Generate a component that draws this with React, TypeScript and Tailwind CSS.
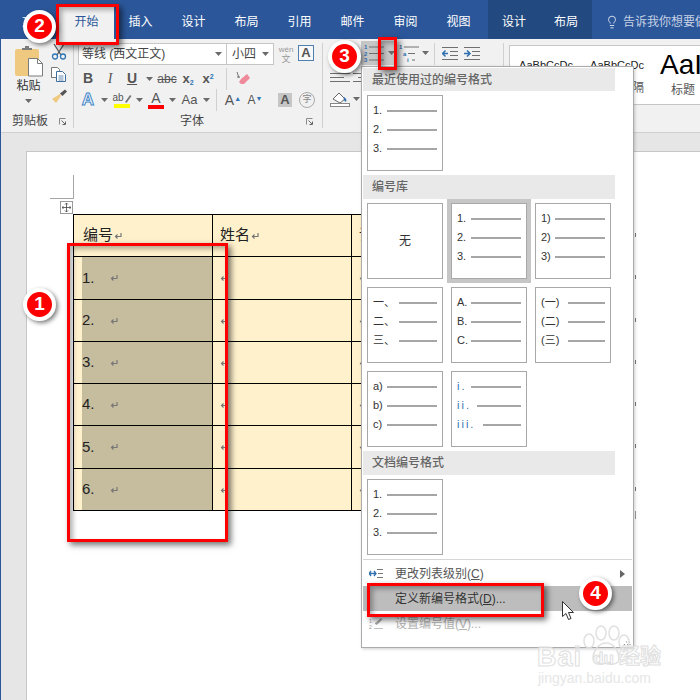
import { Lightbulb } from "lucide-react";
import type { ReactNode } from "react";

const Caret = ({ className = "" }: { className?: string }) => (
  <svg width="7" height="4" viewBox="0 0 7 4" className={className}>
    <path d="M0 0h7L3.5 4z" fill="#6a6a6a" />
  </svg>
);

const Cell = ({ w, children }: { w: string; children: ReactNode }) => (
  <div className={`${w} h-full shrink-0 flex items-center justify-center`}>{children}</div>
);

const Launcher = () => (
  <svg width="7" height="7" viewBox="0 0 7 7">
    <path d="M.5 6.5v-6h6" fill="none" stroke="#8a8a8a" />
    <path d="M2.5 2.5l3.5 3.5M6.5 3.5v3h-3" fill="none" stroke="#666" />
  </svg>
);

const ReturnMark = () => (
  <svg width="8" height="8" viewBox="0 0 8 8" className="shrink-0">
    <path d="M7 1v3.5H1.5M3.5 2.5l-2 2 2 2" fill="none" stroke="#777" strokeWidth="1.2" />
  </svg>
);

const Lines = ({ rows = 3, w = 20, right = false }: { rows?: number; w?: number; right?: boolean }) => (
  <svg width={w} height="13" viewBox={`0 0 ${w} 13`}>
    {Array.from({ length: rows }).map((_, i) => (
      <path
        key={i}
        d={`M${right && i % 2 ? 5 : 0} ${2.5 + i * 4}H${!right && i % 2 ? w - 6 : w}`}
        stroke="#6f6f6f"
      />
    ))}
  </svg>
);

function ClipboardGroup() {
  return (
    <div className="w-[73px] shrink-0 flex flex-col border-r border-[#d0d0d0]">
      <div className="flex pl-[5px]">
        <div className="w-[45px] flex flex-col items-center">
          <svg width="30" height="32" viewBox="0 0 30 32" className="mt-[2px]">
            <rect x="1" y="4" width="24" height="27" rx="2" fill="#f0c981" />
            <path d="M8 5V3h3V1h4v2h3v2z" fill="#7b7b7b" />
            <path d="M14.5 13.5h9l5 5v12.500h-14z" fill="#fff" stroke="#7b7b7b" />
            <path d="M23.500 13.500v5h5" fill="none" stroke="#7b7b7b" />
          </svg>
          <div className="text-[12px] leading-[16px] text-[#333] mt-[1px]">粘贴</div>
          <Caret className="mt-[5px]" />
        </div>
        <div className="flex flex-col gap-[7px]">
          <svg width="16" height="17" viewBox="0 0 16 17">
            <path d="M3 1l7 11M13 1L6 12" stroke="#555" strokeWidth="1.3" />
            <circle cx="4" cy="13.500" r="2.500" fill="none" stroke="#2f75b5" strokeWidth="1.300" />
            <circle cx="12" cy="13.500" r="2.500" fill="none" stroke="#2f75b5" strokeWidth="1.300" />
          </svg>
          <svg width="16" height="15" viewBox="0 0 16 15">
            <path d="M.5.5h6l2 2v8H.5z" fill="#fff" stroke="#777" />
            <path d="M5.500 4.500h6l3 3v7h-9z" fill="#fff" stroke="#3f6f9f" />
            <path d="M7.500 9h5M7.500 11h5M7.500 13h5" stroke="#3f6f9f" strokeWidth=".8" />
          </svg>
          <svg width="16" height="15" viewBox="0 0 16 15">
            <path d="M9 5l-8 5 4 4 5-7z" fill="#f0c981" />
            <path d="M9 4.500l2.500 2.500L16 2.500 14 .5z" fill="#555" />
          </svg>
        </div>
      </div>
      <div className="mt-auto h-[14px] flex items-center">
        <div className="w-[58px] text-center text-[12px] leading-[14px] text-[#444]">剪贴板</div>
        <Launcher />
      </div>
    </div>
  );
}

function FontGroup() {
  return (
    <div className="w-[249px] shrink-0 flex flex-col border-r border-[#d0d0d0] pl-[4px]">
      <div className="flex h-[22px]">
        <div className="w-[149px] h-[22px] bg-white border border-[#c6c6c6] flex items-center justify-between pl-[3px] pr-[4px] text-[12px] text-[#444]">
          <span>等线 (西文正文)</span>
          <Caret />
        </div>
        <div className="w-[47px] h-[22px] bg-white border border-l-0 border-[#c6c6c6] flex items-center justify-between pl-[5px] pr-[4px] text-[12px] text-[#444]">
          <span>小四</span>
          <Caret />
        </div>
        <div className="w-[24px] flex flex-col items-center text-[#999] leading-none pt-[3px]">
          <span className="text-[8px] leading-[8px]">wén</span>
          <span className="text-[9px] leading-[10px]">文</span>
        </div>
        <div className="w-[16px] h-[16px] mt-[2px] border border-[#4f7fae] bg-[#f8f8f8] flex items-center justify-center text-[13px] font-bold text-[#555]">
          A
        </div>
      </div>
      <div className="flex h-[21px] mt-[3px] text-[#555]">
        <Cell w="w-[20px]"><span className="text-[14px] font-bold">B</span></Cell>
        <Cell w="w-[24px]"><span className="text-[14px] italic font-['Liberation_Serif',serif]">I</span></Cell>
        <Cell w="w-[20px]"><span className="text-[14px] font-bold underline">U</span></Cell>
        <Cell w="w-[14px]"><Caret /></Cell>
        <Cell w="w-[22px]"><span className="text-[12px] line-through">abc</span></Cell>
        <Cell w="w-[20px]"><span className="text-[13px] font-bold">x<sub className="text-[7px] text-[#2f75b5]">2</sub></span></Cell>
        <Cell w="w-[20px]"><span className="text-[13px] font-bold">x<sup className="text-[7px] text-[#2f75b5]">2</sup></span></Cell>
        <div className="w-[8px]" />
        <div className="w-px h-[22px] bg-[#d0d0d0]" />
        <Cell w="w-[32px]">
          <svg width="16" height="16" viewBox="0 0 16 16">
            <path d="M6 8l6-5 3 4-6 6H6l-2-2z" fill="#ee8a9a" />
            <path d="M2 1l2 6M2 6h3" stroke="#777" fill="none" />
          </svg>
        </Cell>
      </div>
      <div className="flex h-[22px] text-[#555]">
        <Cell w="w-[20px]">
          <span className="text-[17px] font-bold text-white [-webkit-text-stroke:1px_#3f86c8]">A</span>
        </Cell>
        <Cell w="w-[12px]"><Caret /></Cell>
        <Cell w="w-[24px]">
          <div className="flex flex-col items-center leading-none">
            <div className="flex items-center h-[12px]">
              <span className="text-[10px] leading-[12px]">ab</span>
              <svg width="8" height="10" viewBox="0 0 8 10"><path d="M1 9l5-7 1.500 1-5 7z" fill="#777" /></svg>
            </div>
            <div className="w-[16px] h-[4px] bg-[#ffff00]" />
          </div>
        </Cell>
        <Cell w="w-[11px]"><Caret /></Cell>
        <Cell w="w-[22px]">
          <div className="flex flex-col items-center leading-none">
            <span className="text-[14px] leading-[13px]">A</span>
            <div className="w-[16px] h-[4px] bg-[#ff0000]" />
          </div>
        </Cell>
        <Cell w="w-[10px]"><Caret /></Cell>
        <Cell w="w-[25px]"><span className="text-[13px]">Aa</span></Cell>
        <Cell w="w-[8px]"><Caret /></Cell>
        <div className="w-[6px]" />
        <div className="w-px h-[22px] bg-[#d0d0d0]" />
        <div className="w-[5px]" />
        <Cell w="w-[22px]">
          <span className="text-[14px]">A<sup className="text-[7px] text-[#2f75b5]">▲</sup></span>
        </Cell>
        <Cell w="w-[22px]">
          <span className="text-[12px]">A<sup className="text-[7px] text-[#2f75b5]">▼</sup></span>
        </Cell>
        <div className="w-[8px]" />
        <Cell w="w-[22px]">
          <div className="w-[14px] h-[14px] bg-[#c6c6c6] flex items-center justify-center text-[13px] font-bold">A</div>
        </Cell>
        <Cell w="w-[22px]">
          <div className="w-[16px] h-[16px] rounded-full border border-[#aaa] flex items-center justify-center text-[9px] text-[#888]">字</div>
        </Cell>
      </div>
      <div className="mt-auto h-[14px] flex items-center">
        <div className="w-[228px] text-center text-[12px] leading-[14px] text-[#444]">字体</div>
        <Launcher />
      </div>
    </div>
  );
}

function NumberGlyph({ rows, step = 0 }: { rows: string[]; step?: number }) {
  return (
    <svg width="22" height="20" viewBox="0 0 22 20">
      {rows.map((r, i) => (
        <g key={r}>
          <text x={1 + i * step} y={6 + i * 6.500} fontSize="6" fontWeight="700" fill="#2f6fb0">{r}</text>
          <path d={`M${6 + i * step} ${4 + i * 6.500}H${i && step ? 17 : 21}`} stroke="#6f6f6f" />
        </g>
      ))}
    </svg>
  );
}

function ParagraphGroup() {
  return (
    <div className="w-[181px] shrink-0 flex flex-col border-r border-[#d0d0d0]">
      <div className="flex h-[22px] -mt-[2px]">
        <div className="w-[38px]" />
        <div className="w-[34px] h-[24px] bg-[#c6c6c6] flex items-center pl-[2px] gap-[3px]">
          <NumberGlyph rows={["1", "2", "3"]} />
          <Caret />
        </div>
        <div className="w-[3px]" />
        <div className="w-[34px] flex items-center h-[24px] gap-[2px]">
          <NumberGlyph rows={["1", "a", "i"]} step={4} />
          <Caret />
        </div>
        <div className="w-[2px]" />
        <div className="w-px h-[22px] mt-[2px] bg-[#d0d0d0]" />
        <div className="w-[7px]" />
        <div className="h-[24px] flex items-center gap-[6px]">
          <svg width="16" height="13" viewBox="0 0 16 13">
            <path d="M0 .5h16M8 4.500h8M8 8.500h8M0 12.500h16" stroke="#6f6f6f" />
            <path d="M6 6.500H1M3.500 3.500l-3 3 3 3" stroke="#2f6fb0" strokeWidth="1.500" fill="none" />
          </svg>
          <svg width="16" height="13" viewBox="0 0 16 13">
            <path d="M0 .5h16M8 4.500h8M8 8.500h8M0 12.500h16" stroke="#6f6f6f" />
            <path d="M0 6.500h5M3 3.500l3 3-3 3" stroke="#2f6fb0" strokeWidth="1.500" fill="none" />
          </svg>
        </div>
      </div>
      <div className="flex items-center h-[18px] mt-[5px] pl-[7px] gap-[3px]">
        <Lines />
        <Lines right />
      </div>
      <div className="flex items-center h-[18px] mt-[4px] pl-[7px] gap-[3px]">
        <svg width="20" height="16" viewBox="0 0 20 16">
          <path d="M3 8l6-6 6 6-5 4z" fill="#fff" stroke="#666" />
          <path d="M14 6c2 1 3 3 2 5-2-1-3-3-2-5z" fill="#2f6fb0" />
          <rect x=".5" y="12.500" width="19" height="3" fill="#fff" stroke="#888" />
        </svg>
        <Caret />
      </div>
    </div>
  );
}

function StylesGroup() {
  return (
    <div className="flex-1 pl-[5px] pt-[2px] min-w-0 overflow-hidden">
      <div className="h-[60px] bg-white border border-r-0 border-[#c6c6c6] flex overflow-hidden">
        <div className="w-[72px] shrink-0 flex flex-col items-center pt-[12px]">
          <span className="text-[11px] leading-[14px] text-[#222]">AaBbCcDc</span>
        </div>
        <div className="w-[70px] shrink-0 flex flex-col items-center pt-[12px]">
          <span className="text-[11px] leading-[14px] text-[#222]">AaBbCcDc</span>
          <span className="self-end pr-[8px] mt-[8px] text-[12px] leading-[16px] text-[#555]">隔</span>
        </div>
        <div className="shrink-0 pl-[8px] flex flex-col">
          <span className="text-[28px] leading-[34px] text-black mt-[2px] font-['Liberation_Sans',sans-serif]">AaI</span>
          <span className="pl-[11px] text-[12px] leading-[16px] text-[#555]">标题</span>
        </div>
      </div>
    </div>
  );
}

function Ribbon() {
  return (
    <div className="h-[94px] shrink-0 bg-[#f1f1f1] border-b border-[#d0d0d0] flex pt-[4px] pb-[4px]">
      <ClipboardGroup />
      <FontGroup />
      <ParagraphGroup />
      <StylesGroup />
    </div>
  );
}

function TitleBar() {
  const tabs = ["插入", "设计", "布局", "引用", "邮件", "审阅", "视图"];
  return (
    <div className="h-[39px] shrink-0 bg-[#2b579a] flex items-end text-[12px] text-white">
      <div className="w-[58px] h-[34px] shrink-0 flex items-center justify-center pl-[8px]">文件</div>
      <div className="w-[55px] h-[34px] shrink-0 bg-[#f1f1f1] text-[#2b579a] flex items-center justify-center">开始</div>
      {tabs.map((t) => (
        <div key={t} className="w-[53px] h-[34px] shrink-0 flex items-center justify-center">{t}</div>
      ))}
      <div className="w-[3px] shrink-0" />
      <div className="h-[39px] shrink-0 bg-[#224a80] flex items-end">
        <div className="w-[52px] h-[34px] flex items-center justify-center">设计</div>
        <div className="w-[52px] h-[34px] flex items-center justify-center">布局</div>
      </div>
      <div className="h-[34px] shrink-0 flex items-center pl-[13px] gap-[4px] text-[#c6d1e4] whitespace-nowrap">
        <Lightbulb size={14} strokeWidth={1.500} color="#e6ebf3" />
        <span>告诉我你想要做什么</span>
      </div>
    </div>
  );
}

const rowHeights = [
  { id: "编号", h: "h-[41px]" },
  { id: "1.", h: "h-[42px]" },
  { id: "2.", h: "h-[41px]" },
  { id: "3.", h: "h-[41px]" },
  { id: "4.", h: "h-[41px]" },
  { id: "5.", h: "h-[42px]" },
  { id: "6.", h: "h-[41px]" },
];

function DocTable() {
  return (
    <div className="flex items-start ml-[23px]">
      <table className="table-fixed border-collapse w-[556px] text-[15px] text-[#222] shrink-0">
        <tbody>
          {rowHeights.map((row, i) => (
            <tr key={row.id}>
              <td className="w-[139px] p-0 border border-black bg-[#fff1cc]">
                {i === 0 ? (
                  <div className={`${row.h} flex items-center pl-[9px] gap-[1px]`}>
                    编号<ReturnMark />
                  </div>
                ) : (
                  <div className={`${row.h} ml-[8px] bg-[#c6bd9f] flex items-center`}>
                    <span className="w-[28px]">{row.id}</span>
                    <ReturnMark />
                  </div>
                )}
              </td>
              <td className="w-[139px] p-0 border border-black bg-[#fff1cc]">
                <div className={`${row.h} flex items-center pl-[7px] gap-[1px]`}>
                  {i === 0 && "姓名"}
                  <ReturnMark />
                </div>
              </td>
              <td className="w-[139px] p-0 border border-black bg-[#fff1cc]">
                <div className={`${row.h} flex items-center pl-[7px] gap-[1px]`}>
                  {i === 0 && "课程"}
                  <ReturnMark />
                </div>
              </td>
              <td className="w-[139px] p-0 border border-black bg-[#fff1cc]" />
            </tr>
          ))}
        </tbody>
      </table>
      <div className="flex flex-col ml-[5px] shrink-0">
        {rowHeights.map((row) => (
          <div key={row.id} className={`${row.h} mb-px flex items-center`}>
            <div className="w-px h-[4px] bg-[#777]" />
          </div>
        ))}
        <div className="w-px h-[8px] mt-[1px] bg-[#999]" />
      </div>
    </div>
  );
}

function Document() {
  return (
    <div className="flex-1 bg-[#e6e6e6] pl-[25px] pt-[18px] min-h-0">
      <div className="h-full bg-white border-l border-t border-[#c6c6c6] pl-[23px] pt-[23px]">
        <div className="w-[24px] h-[24px] border-r border-b border-[#a6a6a6]" />
        <div className="w-[13px] h-[13px] ml-[10px] mt-[2px] border border-[#999] bg-white flex items-center justify-center">
          <svg width="9" height="9" viewBox="0 0 9 9">
            <path d="M4.500 0v9M0 4.500h9M3 1.500L4.500 0 6 1.500M3 7.500L4.500 9 6 7.500M1.500 3L0 4.500 1.500 6M7.500 3L9 4.500 7.500 6" fill="none" stroke="#444" strokeWidth=".8" />
          </svg>
        </div>
        <DocTable />
      </div>
    </div>
  );
}

function Tile({
  rows,
  ring = false,
  className = "",
}: {
  rows: { label: string; w: string }[];
  ring?: boolean;
  className?: string;
}) {
  return (
    <div className={`w-[76px] h-[76px] shrink-0 border border-[#a8a8a8] bg-white pt-[5px] pl-[5px] pr-[5px] ${ring ? "ring-4 ring-[#c6c6c6]" : ""} ${className}`}>
      {rows.map((r) => (
        <div key={r.label} className="h-[19px] flex items-center text-[11px] text-[#333]">
          <span className={`${r.w} shrink-0 whitespace-nowrap`}>{r.label}</span>
          <div className="flex-1 h-[2px] bg-[#a6a6a6]" />
        </div>
      ))}
    </div>
  );
}

const num = ["1.", "2.", "3."].map((label) => ({ label, w: "w-[14px]" }));

const SectionHead = ({ children, h = "h-[24px]" }: { children: ReactNode; h?: string }) => (
  <div className={`w-[252px] ${h} shrink-0 bg-[#e9e9e9] flex items-center pl-[9px] text-[12px] font-medium text-[#666]`}>
    {children}
  </div>
);

function NumberMenu() {
  return (
    <div className="absolute left-[361px] top-[66px] w-[273px] h-[582px] bg-white border border-[#ababab] shadow-[1px_1px_3px_rgba(0,0,0,0.2)] pl-px pt-px flex flex-col">
      <SectionHead h="h-[23px]">最近使用过的编号格式</SectionHead>
      <Tile rows={num} className="ml-[4px] mt-[4px]" />
      <div className="h-[4px] shrink-0" />
      <SectionHead>编号库</SectionHead>
      <div className="grid grid-cols-[76px_76px_76px] gap-[8px] ml-[4px] mt-[4px]">
        <div className="w-[76px] h-[76px] border border-[#a8a8a8] flex items-center justify-center text-[12px] text-[#333]">无</div>
        <Tile rows={num} ring />
        <Tile rows={["1)", "2)", "3)"].map((label) => ({ label, w: "w-[14px]" }))} />
        <Tile rows={["一、", "二、", "三、"].map((label) => ({ label, w: "w-[26px]" }))} />
        <Tile rows={["A.", "B.", "C."].map((label) => ({ label, w: "w-[14px]" }))} />
        <Tile rows={["(一)", "(二)", "(三)"].map((label) => ({ label, w: "w-[27px]" }))} />
        <Tile rows={["a)", "b)", "c)"].map((label) => ({ label, w: "w-[14px]" }))} />
        <Tile
          rows={[
            { label: "i.", w: "w-[14px] tracking-[2px] text-[#2f75b5]" },
            { label: "ii.", w: "w-[20px] tracking-[2px] text-[#2f75b5]" },
            { label: "iii.", w: "w-[26px] tracking-[2px] text-[#2f75b5]" },
          ]}
        />
      </div>
      <div className="h-[4px] shrink-0" />
      <SectionHead>文档编号格式</SectionHead>
      <Tile rows={num} className="ml-[4px] mt-[4px]" />
      <div className="h-px bg-[#d6d6d6] mt-[4px] mr-px shrink-0" />
      <div className="h-[25px] shrink-0 pl-[6px] pr-[8px] flex items-center text-[12px] text-[#555] mt-px">
        <svg width="14" height="9" viewBox="0 0 14 9" className="mr-[12px]">
          <path d="M0 4.500h7M2 2L0 4.500 2 7M5 2l2 2.500L5 7" fill="none" stroke="#2f6fb0" strokeWidth="1.300" />
          <path d="M8 .5h6M9 4.500h5M8 8.500h6" stroke="#777" />
        </svg>
        <span className="flex-1">更改列表级别(<span className="underline">C</span>)</span>
        <svg width="5" height="8" viewBox="0 0 5 8"><path d="M0 0l5 4-5 4z" fill="#666" /></svg>
      </div>
      <div className="h-[25px] shrink-0 w-[269px] bg-[#bdbdbd] pl-[32px] flex items-center text-[12px] text-[#333]">
        定义新编号格式(<span className="underline">D</span>)...
      </div>
      <div className="h-[25px] shrink-0 pl-[6px] flex items-center text-[12px] text-[#b3b3b3]">
        <svg width="14" height="13" viewBox="0 0 14 13" className="mr-[12px]">
          <path d="M5 11.500h9M6 6.500l6-5 1 1-5 5z" stroke="#999" fill="#aaa" strokeWidth=".6" />
          <text x="0" y="6" fontSize="5" fill="#999">1</text>
          <text x="0" y="12" fontSize="5" fill="#999">2</text>
        </svg>
        设置编号值(<span className="underline">V</span>)...
      </div>
      <svg width="8" height="8" viewBox="0 0 8 8" className="absolute right-[2px] bottom-[1px]">
        <path d="M5 1h1v1H5zM3 3.500h1v1H3zM6 3.500h1v1H6zM1 6h1v1H1zM4 6h1v1H4zM6.500 6h1v1h-1z" fill="#888" />
      </svg>
    </div>
  );
}

const boxShadow = "shadow-[3px_3px_6px_rgba(0,0,0,0.55),inset_3px_3px_5px_rgba(0,0,0,0.3)]";

const Badge = ({ n, className }: { n: number; className: string }) => (
  <div className={`absolute w-[33px] h-[33px] rounded-full bg-[#ff0000] border-[4px] border-white shadow-[2px_2px_4px_rgba(0,0,0,0.5)] flex items-center justify-center text-white text-[19px] font-bold font-['Liberation_Sans',sans-serif] ${className}`}>
    {n}
  </div>
);

function Watermark() {
  return (
    <div className="absolute left-[535px] top-[625px] w-[135px] h-[60px] pointer-events-none opacity-90">
      <svg width="50" height="42" viewBox="0 0 50 42" className="absolute left-[46px] top-0">
        <g fill="none" stroke="#dedede" strokeWidth="1.500">
          <ellipse cx="8" cy="16" rx="5" ry="7" />
          <ellipse cx="20" cy="8" rx="5" ry="7" />
          <ellipse cx="33" cy="8" rx="5" ry="7" />
          <ellipse cx="43" cy="17" rx="5" ry="7" />
          <path d="M25 18c-8 0-13 9-13 15 0 7 8 7 13 5 5 2 13 2 13-5 0-6-5-15-13-15z" />
        </g>
      </svg>
      <span className="absolute left-[2px] top-[17px] text-[27px] leading-[30px] font-bold tracking-[1px] text-white/60 [-webkit-text-stroke:1px_#dcdcdc] font-['Liberation_Sans',sans-serif]">Bai</span>
      <span className="absolute left-[58px] top-[24px] text-[17px] leading-[20px] font-bold text-white/60 [-webkit-text-stroke:1px_#dcdcdc] font-['Liberation_Sans',sans-serif]">du</span>
      <span className="absolute left-[84px] top-[18px] text-[21px] leading-[26px] font-bold text-white/60 [-webkit-text-stroke:1px_#dcdcdc]">经验</span>
      <span className="absolute left-[3px] top-[45px] text-[14px] leading-[16px] text-[#e4e4e4] whitespace-nowrap font-['Liberation_Sans',sans-serif]">jingyan.baidu.com</span>
    </div>
  );
}

export default function App() {
  return (
    <div className="relative w-[700px] h-[700px] overflow-hidden bg-[#2b579a] pl-px flex flex-col font-['Liberation_Sans','Noto_Sans_CJK_SC',sans-serif]">
      <TitleBar />
      <Ribbon />
      <Document />
      <NumberMenu />

      <div className={`absolute left-[56px] top-[4px] w-[63px] h-[41px] border-[3px] border-[#ff0000] ${boxShadow}`} />
      <div className={`absolute left-[378px] top-[37px] w-[19px] h-[33px] border-[3px] border-[#ff0000] ${boxShadow}`} />
      <div className={`absolute left-[67px] top-[243px] w-[161px] h-[299px] border-[3px] border-[#ff0000] ${boxShadow}`} />
      <div className={`absolute left-[367px] top-[583px] w-[177px] h-[34px] border-[3px] border-[#ff0000] ${boxShadow}`} />

      <Badge n={2} className="left-[23px] top-[10px]" />
      <Badge n={3} className="left-[328px] top-[40px]" />
      <Badge n={1} className="left-[23px] top-[288px]" />
      <Badge n={4} className="left-[579px] top-[577px]" />

      <svg width="13" height="20" viewBox="0 0 13 20" className="absolute left-[562px] top-[601px]">
        <path d="M.5.5v15l3.500-3 2.500 6 2.500-1-2.500-6h5z" fill="#fff" stroke="#333" />
      </svg>

      <Watermark />
    </div>
  );
}
